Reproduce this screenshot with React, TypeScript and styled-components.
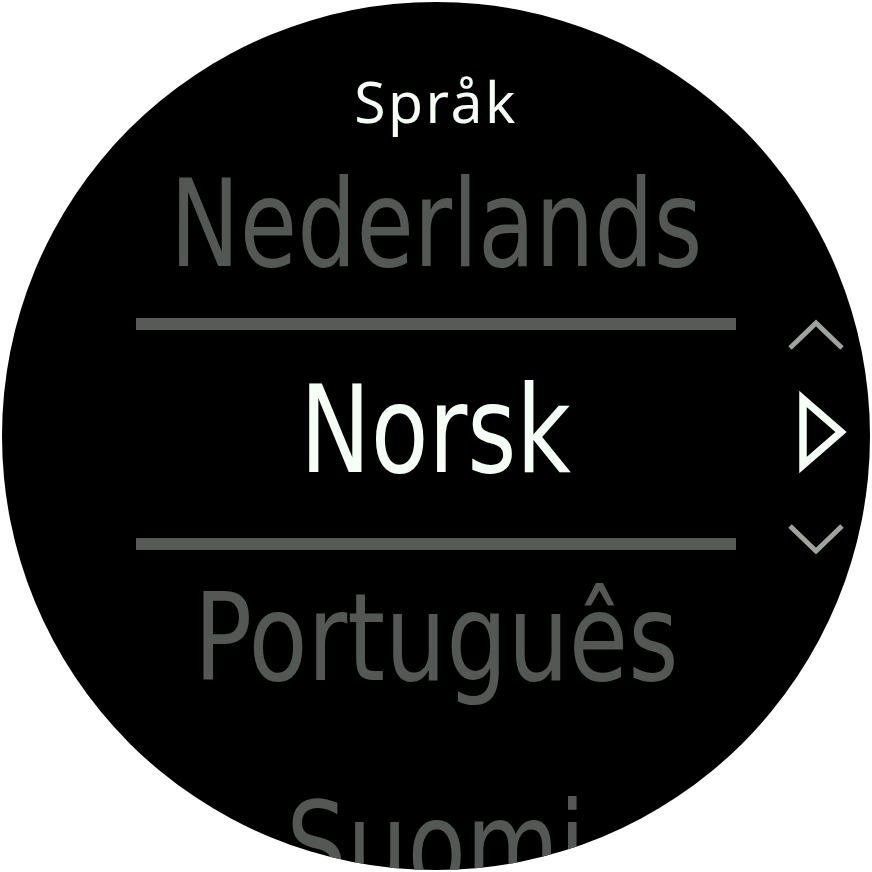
import React from "react";
import styled, { createGlobalStyle } from "styled-components";

const GlobalStyle = createGlobalStyle`
  html, body {
    margin: 0;
    padding: 0;
    background: #ffffff;
  }
  body {
    width: 872px;
    height: 872px;
    overflow: hidden;
  }
`;

const Face = styled.div`
  position: relative;
  width: 868px;
  height: 868px;
  margin: 2px;
  border-radius: 50%;
  background: #000000;
  overflow: hidden;
  display: flex;
  flex-direction: column;
  align-items: center;
`;

const Title = styled.div`
  padding-top: 70px;
  height: 60px;
  line-height: 58px;
  font-family: "Noto Sans", "Liberation Sans", sans-serif;
  font-size: 57px;
  letter-spacing: 2.5px;
  color: #f6fff6;
`;

const Item = styled.div<{ $h: number; $shift?: number; $selected?: boolean }>`
  flex: none;
  box-sizing: border-box;
  height: ${(p) => p.$h}px;
  padding-bottom: ${(p) => (p.$shift || 0) * 2}px;
  display: flex;
  align-items: center;
  justify-content: center;
  font-family: "Liberation Sans Narrow", "DejaVu Sans Condensed", sans-serif;
  font-size: 122px;
  line-height: 1;
  white-space: nowrap;
  color: ${(p) => (p.$selected ? "#f6fff6" : "#545854")};
`;

const Label = styled.span<{ $squeeze: number }>`
  display: inline-block;
  transform: scaleX(${(p) => p.$squeeze});
  transform-origin: center;
`;

const Divider = styled.div`
  flex: none;
  width: 600px;
  height: 12px;
  background: #575a56;
`;

const Nav = styled.div`
  position: absolute;
  left: 784px;
  top: 316px;
  display: flex;
  flex-direction: column;
  align-items: flex-start;
`;

const Chevron = ({ down }: { down?: boolean }) => (
  <svg width="60" height="34" viewBox="0 0 60 34" style={{ display: "block" }}>
    <path
      d={down ? "M4 6 L30 31 L56 6" : "M4 30 L30 5 L56 30"}
      fill="none"
      stroke="#9da39d"
      strokeWidth={5}
    />
  </svg>
);

const Play = () => (
  <svg width="62" height="92" viewBox="0 0 62 92" style={{ display: "block", margin: "38px 0 38px" }}>
    <path d="M17 9 L55 42 L17 75 Z" fill="none" stroke="#f6fff6" strokeWidth={7.5} />
  </svg>
);

export default function App() {
  return (
    <>
      <GlobalStyle />
      <Face>
        <Title>Språk</Title>
        <Item $h={188}>
          <Label $squeeze={0.85}>Nederlands</Label>
        </Item>
        <Divider />
        <Item $h={208} $shift={4.5} $selected>
          <Label $squeeze={0.86}>Norsk</Label>
        </Item>
        <Divider />
        <Item $h={175}>
          <Label $squeeze={0.88}>Português</Label>
        </Item>
        <Item $h={241}>
          <Label $squeeze={0.87}>Suomi</Label>
        </Item>
        <Nav>
          <Chevron />
          <Play />
          <Chevron down />
        </Nav>
      </Face>
    </>
  );
}
